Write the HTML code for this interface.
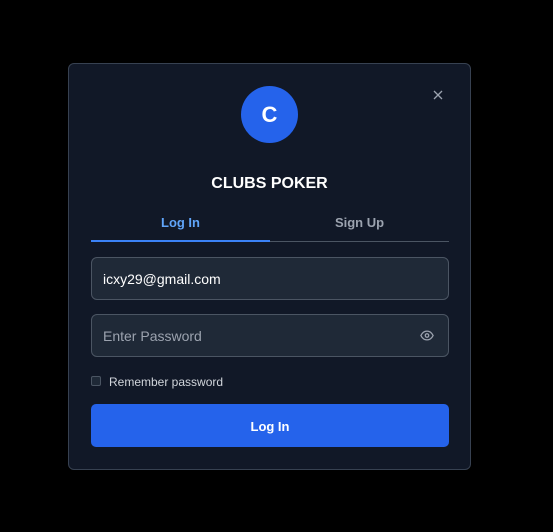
<!DOCTYPE html>
<html><head><style>
*{box-sizing:border-box;margin:0;padding:0}
body{width:553px;height:532px;background:#000;font-family:"Liberation Sans",sans-serif;position:relative;overflow:hidden}
.m{position:absolute;left:68px;top:63px;width:403px;height:407px;background:#111827;border:1px solid #374151;border-radius:6px}
.a{position:absolute}
.c{left:172px;top:22px;width:57px;height:57px;border-radius:50%;background:#2563eb;color:#fff;font-weight:bold;font-size:22px;text-align:center;line-height:57px}
.t{left:0;width:401px;top:111px;text-align:center;color:#fff;font-weight:bold;font-size:16px}
.tab{top:151px;width:179px;text-align:center;font-size:13px;font-weight:bold}
.in{left:22px;width:358px;height:43px;background:#1f2937;border:1px solid #4b5563;border-radius:6px;font-size:14px;padding-left:11px;line-height:43px}
.btn{left:22px;top:340px;width:358px;height:43px;background:#2563eb;border-radius:5px;color:#fff;font-weight:bold;font-size:13px;text-align:center;line-height:45px}
</style></head><body>
<div class="m">
<svg class="a" style="left:364px;top:26px" width="10" height="10" viewBox="0 0 10 10"><path d="M1 1L9 9M9 1L1 9" stroke="#9ca3af" stroke-width="1.3"/></svg>
<div class="a c">C</div>
<div class="a t">CLUBS POKER</div>
<div class="a tab" style="left:22px;color:#60a5fa">Log In</div>
<div class="a tab" style="left:201px;color:#9ca3af">Sign Up</div>
<div class="a" style="left:22px;top:176px;width:179px;height:2px;background:#3b82f6"></div>
<div class="a" style="left:201px;top:177px;width:179px;height:1px;background:#4b5563"></div>
<div class="a in" style="top:193px;color:#fff">icxy29@gmail.com</div>
<div class="a in" style="top:250px;color:#9ca3af">Enter Password</div>
<svg class="a" style="left:351px;top:266px" width="14" height="11" viewBox="0 0 16 12"><path d="M1 6C3 2 6 1 8 1S13 2 15 6C13 10 10 11 8 11S3 10 1 6Z" fill="none" stroke="#9ca3af" stroke-width="1.5"/><circle cx="8" cy="6" r="2" fill="none" stroke="#9ca3af" stroke-width="1.5"/></svg>
<div class="a" style="left:22px;top:312px;width:10px;height:10px;border:1px solid #4b5563;border-radius:2px;background:#1f2937"></div>
<div class="a" style="left:40px;top:311px;color:#d1d5db;font-size:12px">Remember password</div>
<div class="a btn">Log In</div>
</div>
</body></html>
